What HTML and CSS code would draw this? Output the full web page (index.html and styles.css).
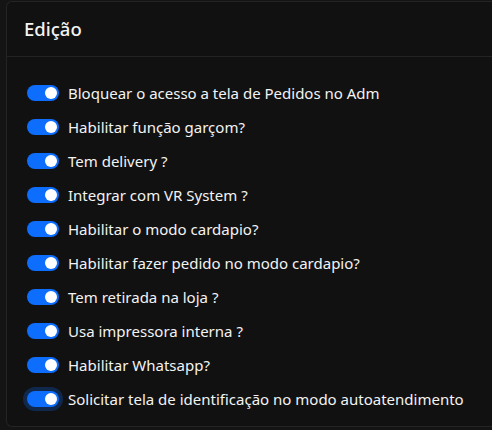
FILE: index.html
```html
<!DOCTYPE html>
<html lang="pt-BR">
<head>
  <meta charset="UTF-8">
  <meta name="viewport" content="width=device-width, initial-scale=1.0">
  <title>Edição</title>
  <link rel="stylesheet" href="styles.css">
</head>
<body>
  <div class="card">
    <div class="card-header">
      <h5>Edição</h5>
    </div>
    <div class="card-body">
      <label class="switch"><input type="checkbox" checked><span class="track"></span> Bloquear o acesso a tela de Pedidos no Adm</label>
      <label class="switch"><input type="checkbox" checked><span class="track"></span> Habilitar função garçom?</label>
      <label class="switch"><input type="checkbox" checked><span class="track"></span> Tem delivery ?</label>
      <label class="switch"><input type="checkbox" checked><span class="track"></span> Integrar com VR System ?</label>
      <label class="switch"><input type="checkbox" checked><span class="track"></span> Habilitar o modo cardapio?</label>
      <label class="switch"><input type="checkbox" checked><span class="track"></span> Habilitar fazer pedido no modo cardapio?</label>
      <label class="switch"><input type="checkbox" checked><span class="track"></span> Tem retirada na loja ?</label>
      <label class="switch"><input type="checkbox" checked><span class="track"></span> Usa impressora interna ?</label>
      <label class="switch"><input type="checkbox" checked><span class="track"></span> Habilitar Whatsapp?</label>
      <label class="switch focus"><input type="checkbox" checked><span class="track"></span> Solicitar tela de identificação no modo autoatendimento</label>
    </div>
  </div>
</body>
</html>
```

FILE: styles.css
```css
body {
  margin: 0;
  padding: 1px 0 0 6px;
  background: #141414;
  color: #f3f3f3;
  font-family: "Noto Sans", "Open Sans", sans-serif;
  font-size: 15px;
}
.card {
  background: #111111;
  border: 1px solid #242424;
  border-right: none;
  border-radius: 6px 0 0 6px;
  height: 426px;
  box-sizing: border-box;
}
.card-header {
  height: 55px;
  box-sizing: border-box;
  border-bottom: 1px solid #242424;
  padding: 13px 17px;
}
.card-header h5 {
  margin: 0;
  font-size: 18.5px;
  font-weight: 500;
  line-height: 28px;
}
.card-body {
  padding: 24px 20px;
  display: flex;
  flex-direction: column;
  gap: 10px;
}
.switch {
  display: flex;
  align-items: center;
  gap: 9px;
  height: 24px;
  white-space: nowrap;
  cursor: pointer;
}
.switch input { display: none; }
.track {
  position: relative;
  width: 32px;
  height: 16px;
  border-radius: 8px;
  background: #0d6efd;
  flex-shrink: 0;
}
.track::after {
  content: "";
  position: absolute;
  top: 2px;
  right: 2px;
  width: 12px;
  height: 12px;
  border-radius: 50%;
  background: #fff;
}
.switch.focus .track {
  box-shadow: 0 0 0 4px rgba(13, 110, 253, 0.25);
}
```
